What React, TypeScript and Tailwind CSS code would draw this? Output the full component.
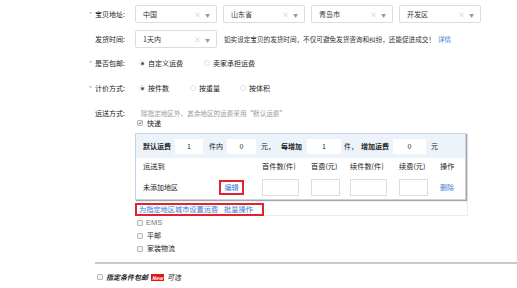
import React from "react";

const Sel = ({ text }: { text: string }) => (
  <div className="w-[82px] h-[18px] border border-[#dcdcdc] rounded-[2px] flex items-center pl-[7px] pr-[6px] bg-white">
    <span className="flex-1 text-[7px] text-[#333]">{text}</span>
    <span className="text-[7px] text-[#c4c4c4] leading-none">×</span>
    <span className="ml-[4px] text-[5px] text-[#9a9a9a] leading-none">▼</span>
  </div>
);

const Radio = ({ on }: { on?: boolean }) => (
  <span className="w-[6px] h-[6px] rounded-full border border-[#e2e2e2] flex items-center justify-center bg-white shrink-0">
    {on && <span className="w-[3px] h-[3px] rounded-full bg-[#555]" />}
  </span>
);

const Check = ({ on }: { on?: boolean }) => (
  <span className="w-[6px] h-[6px] border border-[#b8b8b8] rounded-[1px] bg-[#f4f4f4] flex items-center justify-center shrink-0">
    {on && (
      <svg width="6" height="6" viewBox="0 0 6 6">
        <path d="M1 3.2 L2.4 4.6 L5.2 1.2" stroke="#333" strokeWidth="1" fill="none" />
      </svg>
    )}
  </span>
);

const Label = ({ req, text }: { req?: boolean; text: string }) => (
  <div className="w-[47px] flex items-center shrink-0">
    <span className="w-[7px] text-[#f08a8a] text-[7px] pl-[1px]">{req ? "*" : ""}</span>
    <span className="text-[7px] text-[#222]">{text}</span>
  </div>
);

export default function App() {
  return (
    <div className="w-[517px] h-[288px] bg-white overflow-hidden text-[#222] text-[7px] font-['Noto_Sans_CJK_SC','Noto_Sans',sans-serif] leading-none">
      <div className="pl-[88px] pt-[5px] flex flex-col">
        {/* row 1 */}
        <div className="flex items-center h-[18px]">
          <Label req text="宝贝地址:" />
          <div className="flex gap-[6px]">
            <Sel text="中国" />
            <Sel text="山东省" />
            <Sel text="青岛市" />
            <Sel text="开发区" />
          </div>
        </div>
        {/* row 2 */}
        <div className="flex items-center h-[18px] mt-[7px]">
          <Label text="发货时间:" />
          <Sel text="1天内" />
          <span className="ml-[7px] text-[6.6px] text-[#333]">
            如实设定宝贝的发货时间，不仅可避免发货咨询和纠纷，还能促进成交！
          </span>
          <span className="ml-[3px] text-[6.6px] text-[#3b7bd3]">详情</span>
        </div>
        {/* row 3 */}
        <div className="flex items-center h-[14px] mt-[8px]">
          <Label req text="是否包邮:" />
          <div className="flex items-center ml-[4px]">
            <Radio on />
            <span className="ml-[3px]">自定义运费</span>
          </div>
          <div className="flex items-center ml-[21px]">
            <Radio />
            <span className="ml-[3px]">卖家承担运费</span>
          </div>
        </div>
        {/* row 4 */}
        <div className="flex items-center h-[14px] mt-[11px]">
          <Label req text="计价方式:" />
          <div className="flex items-center ml-[4px]">
            <Radio on />
            <span className="ml-[3px]">按件数</span>
          </div>
          <div className="flex items-center ml-[21px]">
            <Radio />
            <span className="ml-[3px]">按重量</span>
          </div>
          <div className="flex items-center ml-[20px]">
            <Radio />
            <span className="ml-[3px]">按体积</span>
          </div>
        </div>
        {/* row 5 */}
        <div className="flex items-center h-[10px] mt-[13px]">
          <Label text="运送方式:" />
          <span className="ml-[6px] text-[6.6px] text-[#9a9a9a]">
            除指定地区外，其余地区的运费采用“默认运费”
          </span>
        </div>
        <div className="flex items-center h-[10px] pl-[49px]">
          <Check on />
          <span className="ml-[4px]">快递</span>
        </div>
        {/* table */}
        <div className="ml-[47px] mt-[5px] w-[333px] border-r border-b border-[#ececec] flex flex-col">
          <div className="w-[331px] border border-[#c6d4e6] shadow-[1px_1px_1px_rgba(0,0,0,0.35)] bg-white flex flex-col">
            <div className="h-[24px] bg-[#edf3fa] flex items-center pl-[7px]">
              <span className="font-bold">默认运费</span>
              <span className="ml-[4px] w-[28px] h-[15px] bg-white flex items-center justify-center">1</span>
              <span className="ml-[6px]">件内</span>
              <span className="ml-[4px] w-[29px] h-[15px] bg-white flex items-center justify-center">0</span>
              <span className="ml-[5px]">元，</span>
              <span className="ml-[6px] font-bold">每增加</span>
              <span className="ml-[5px] w-[34px] h-[15px] bg-white flex items-center justify-center">1</span>
              <span className="ml-[3px]">件，</span>
              <span className="ml-[3px] font-bold">增加运费</span>
              <span className="ml-[4px] w-[33px] h-[15px] bg-white flex items-center justify-center">0</span>
              <span className="ml-[5px]">元</span>
            </div>
            <div className="h-[18px] grid grid-cols-[119px_49px_39px_49px_41px_auto] items-center pl-[7px] text-[7.2px]">
              <span>运送到</span>
              <span>首件数(件)</span>
              <span>首费(元)</span>
              <span>续件数(件)</span>
              <span>续费(元)</span>
              <span>操作</span>
            </div>
            <div className="h-[23px] grid grid-cols-[119px_49px_39px_49px_41px_auto] items-center pl-[7px]">
              <div className="flex items-center">
                <span className="w-[76px]">未添加地区</span>
                <span className="w-[25px] h-[15px] border-2 border-solid border-[#e0232d] flex items-center justify-center text-[#3b7bd3]">
                  编辑
                </span>
              </div>
              <span className="w-[37px] h-[17px] border border-[#dedede]" />
              <span className="w-[29px] h-[17px] border border-[#dedede]" />
              <span className="w-[37px] h-[17px] border border-[#dedede]" />
              <span className="w-[29px] h-[17px] border border-[#dedede]" />
              <span className="text-[#3b7bd3]">删除</span>
            </div>
          </div>
          <div className="mt-[3px] -mb-[1px] w-[129px] h-[13px] border-2 border-solid border-[#e0232d] flex items-start pt-[1px] pl-[2px] text-[7.2px] text-[#3b7bd3]">
            <span>为指定地区城市设置运费</span>
            <span className="ml-[6px]">批量操作</span>
          </div>
        </div>
        <div className="flex items-center h-[13px] pl-[49px]">
          <Check />
          <span className="ml-[3px] text-[#777] font-['Liberation_Sans',sans-serif] text-[7.5px]">EMS</span>
        </div>
        <div className="flex items-center h-[13px] pl-[49px]">
          <Check />
          <span className="ml-[4px]">平邮</span>
        </div>
        <div className="flex items-center h-[13px] pl-[49px]">
          <Check />
          <span className="ml-[4px]">家装物流</span>
        </div>
        <div className="ml-[7px] mt-[7px] h-[2px] bg-[#c9c9c9] w-[424px]" />
        <div className="flex items-center h-[10px] mt-[8px] pl-[9px]">
          <Check />
          <span className="ml-[3px] font-bold italic">指定条件包邮</span>
          <span className="ml-[3px] bg-[#e4141b] text-white text-[5px] px-[1px] h-[7px] flex items-center italic font-bold">New</span>
          <span className="ml-[3px] italic">可选</span>
        </div>
      </div>
    </div>
  );
}
